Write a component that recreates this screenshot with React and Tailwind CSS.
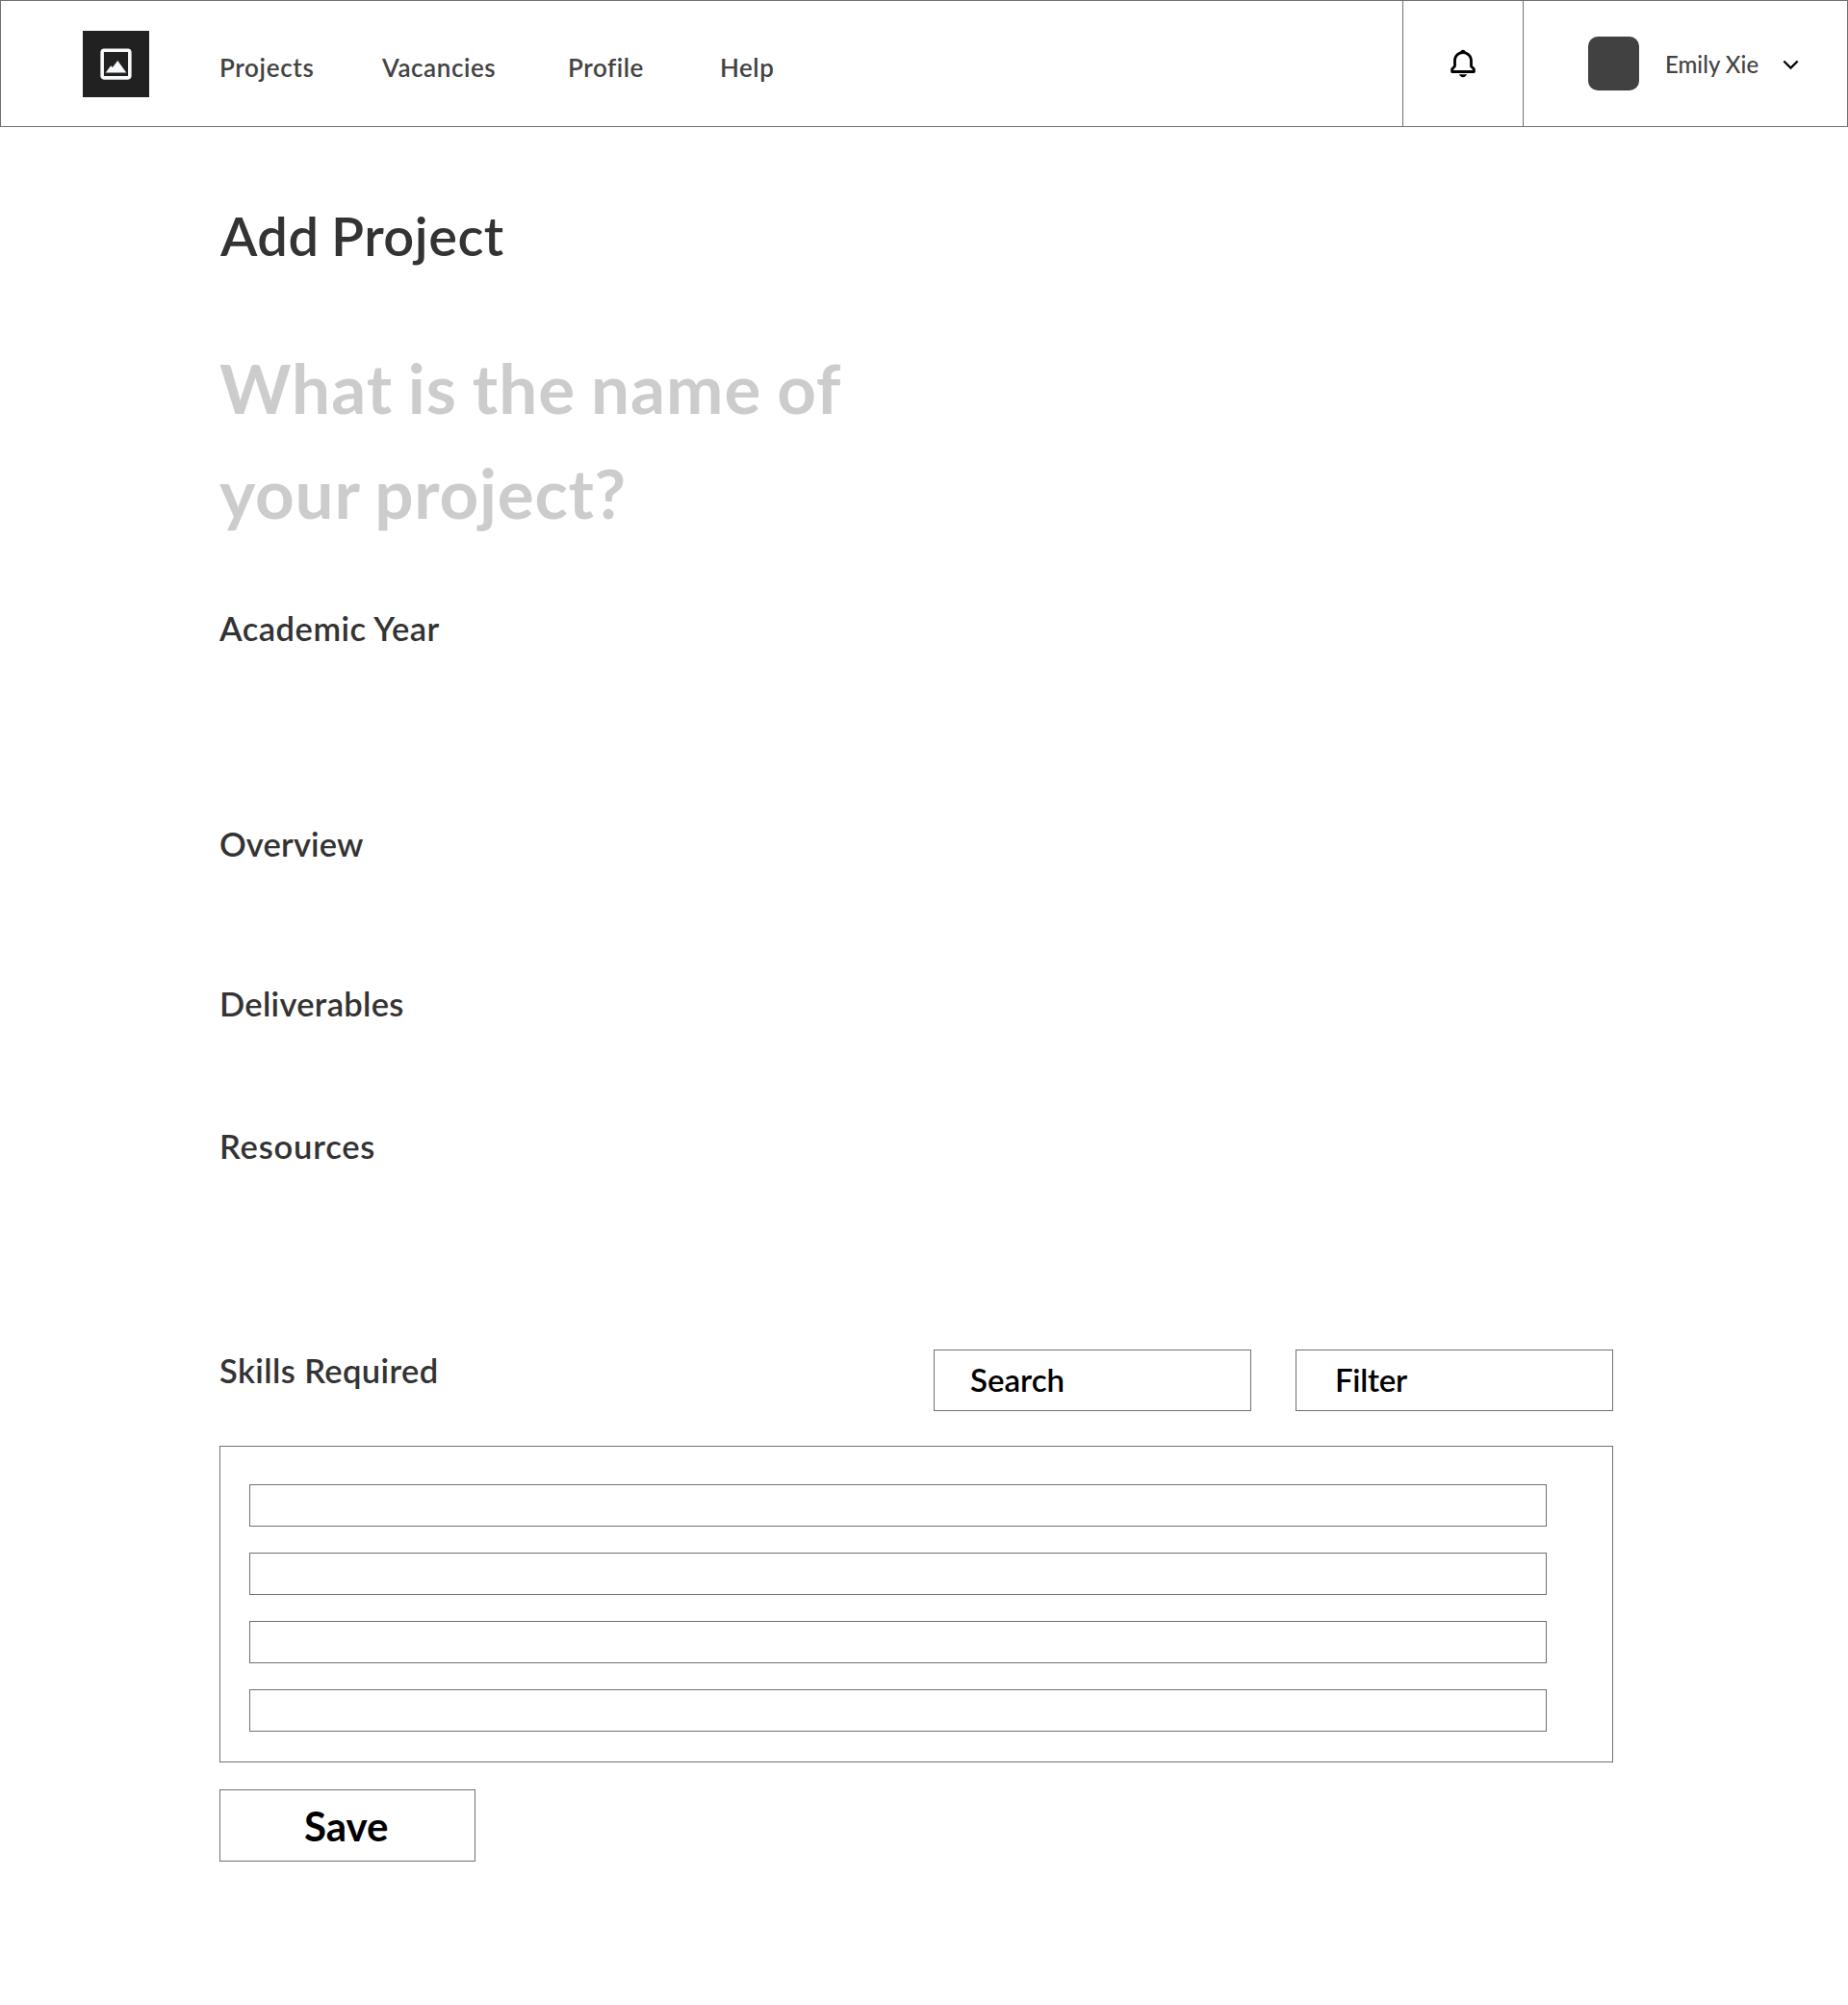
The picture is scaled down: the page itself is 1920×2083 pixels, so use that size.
const navItems = [
  { label: "Projects", className: "w-[169px] tracking-[0.65px]" },
  { label: "Vacancies", className: "w-[193px] tracking-[0.56px]" },
  { label: "Profile", className: "w-[158px] tracking-[0.55px]" },
  { label: "Help", className: "tracking-[0.5px]" },
];

const sections = [
  { label: "Academic Year", className: "mt-[66px] tracking-[0.5px]" },
  { label: "Overview", className: "mt-[182px] tracking-[0.16px]" },
  { label: "Deliverables", className: "mt-[124px] tracking-[0.3px]" },
  { label: "Resources", className: "mt-[106px] tracking-[0.8px]" },
];

function ImageIcon({ className }) {
  return (
    <svg viewBox="0 0 24 24" fill="currentColor" className={className} aria-hidden="true">
      <path d="M19 3H5c-1.103 0-2 .897-2 2v14c0 1.103.897 2 2 2h14c1.103 0 2-.897 2-2V5c0-1.103-.897-2-2-2zM5 19V5h14l.002 14H5z" />
      <path d="m10 14-1-1-3 4h12l-5-7z" />
    </svg>
  );
}

function BellIcon({ className }) {
  return (
    <svg viewBox="0 0 24 24" fill="currentColor" className={className} aria-hidden="true">
      <path d="M19 13.586V10c0-3.217-2.185-5.927-5.145-6.742C13.562 2.52 12.846 2 12 2s-1.562.52-1.855 1.258C7.185 4.074 5 6.783 5 10v3.586l-1.707 1.707A.996.996 0 0 0 3 16v2a1 1 0 0 0 1 1h16a1 1 0 0 0 1-1v-2a.996.996 0 0 0-.293-.707L19 13.586zM19 17H5v-.586l1.707-1.707A.996.996 0 0 0 7 14v-4c0-2.757 2.243-5 5-5s5 2.243 5 5v4c0 .266.105.52.293.707L19 16.414V17zm-7 5a2.98 2.98 0 0 0 2.818-2H9.182A2.98 2.98 0 0 0 12 22z" />
    </svg>
  );
}

function ChevronDownIcon({ className }) {
  return (
    <svg viewBox="0 0 24 24" fill="none" stroke="currentColor" strokeWidth="1.6" className={className} aria-hidden="true">
      <path d="M6.8 9.8 12 15l5.2-5.2" />
    </svg>
  );
}

function Header() {
  return (
    <header className="flex h-[132px] border border-[#707070]">
      <div className="flex flex-1 items-start">
        <div className="mt-[31px] ml-[85px] flex size-[69px] items-center justify-center bg-[#212121] text-[#f8f9fb]">
          <ImageIcon className="size-[43px]" />
        </div>
        <nav className="mt-[49px] ml-[73px] flex text-[26px] leading-10 font-semibold text-[#434343]">
          {navItems.map((item) => (
            <a key={item.label} className={item.className}>
              {item.label}
            </a>
          ))}
        </nav>
      </div>
      <button className="flex w-[126px] items-center justify-center border-x border-[#707070] text-black">
        <BellIcon className="size-[34px]" />
      </button>
      <div className="flex w-[336px] items-start">
        <div className="mt-[37px] ml-[67px] h-14 w-[53px] rounded-[10px] bg-[#414141]" />
        <span className="mt-[46px] ml-[27px] w-[107px] text-2xl leading-10 font-medium text-[#434343]">Emily Xie</span>
        <ChevronDownIcon className="mt-[49px] ml-[7px] size-[33px] text-black" />
      </div>
    </header>
  );
}

export default function App() {
  return (
    <div className="min-h-[2083px] w-[1920px] bg-white font-['Lato',sans-serif]">
      <Header />
      <main className="ml-[228px] flex w-[1448px] flex-col text-[#333333]">
        <h1 className="mt-20 pl-px text-[56px] leading-[66px] font-semibold tracking-[0.5px] [word-spacing:-2px]">
          Add Project
        </h1>
        <p className="mt-[70px] text-[71px] leading-[109px] font-bold text-[#cccccc]">
          <span className="block tracking-[1px] [word-spacing:-2.5px]">What is the name of</span>
          <span className="block tracking-[0.75px] [word-spacing:-2px]">your project?</span>
        </p>
        {sections.map((section) => (
          <h2 key={section.label} className={`text-[34.5px] leading-[42px] font-semibold ${section.className}`}>
            {section.label}
          </h2>
        ))}
        <div className="mt-[190px] flex h-16 items-start">
          <h2 className="mt-px flex-1 text-[34.5px] leading-[42px] font-semibold tracking-[0.38px]">Skills Required</h2>
          <div className="flex gap-[46px] text-[33px] font-semibold text-black">
            <div className="flex h-16 w-[330px] items-center border border-[#707070] pl-[37px]">Search</div>
            <div className="flex h-16 w-[330px] items-center border border-[#707070] pl-10 tracking-[-0.26px]">
              Filter
            </div>
          </div>
        </div>
        <div className="mt-9 flex h-[329px] flex-col gap-[27px] border border-[#707070] pt-[39px] pl-[30px]">
          <div className="h-11 w-[1348px] border border-[#707070]" />
          <div className="h-11 w-[1348px] border border-[#707070]" />
          <div className="h-11 w-[1348px] border border-[#707070]" />
          <div className="h-11 w-[1348px] border border-[#707070]" />
        </div>
        <button className="mt-7 flex h-[75px] w-[266px] items-center border border-[#707070] pt-0.5 pl-[87px] text-[42px] font-bold text-black">
          Save
        </button>
      </main>
    </div>
  );
}
